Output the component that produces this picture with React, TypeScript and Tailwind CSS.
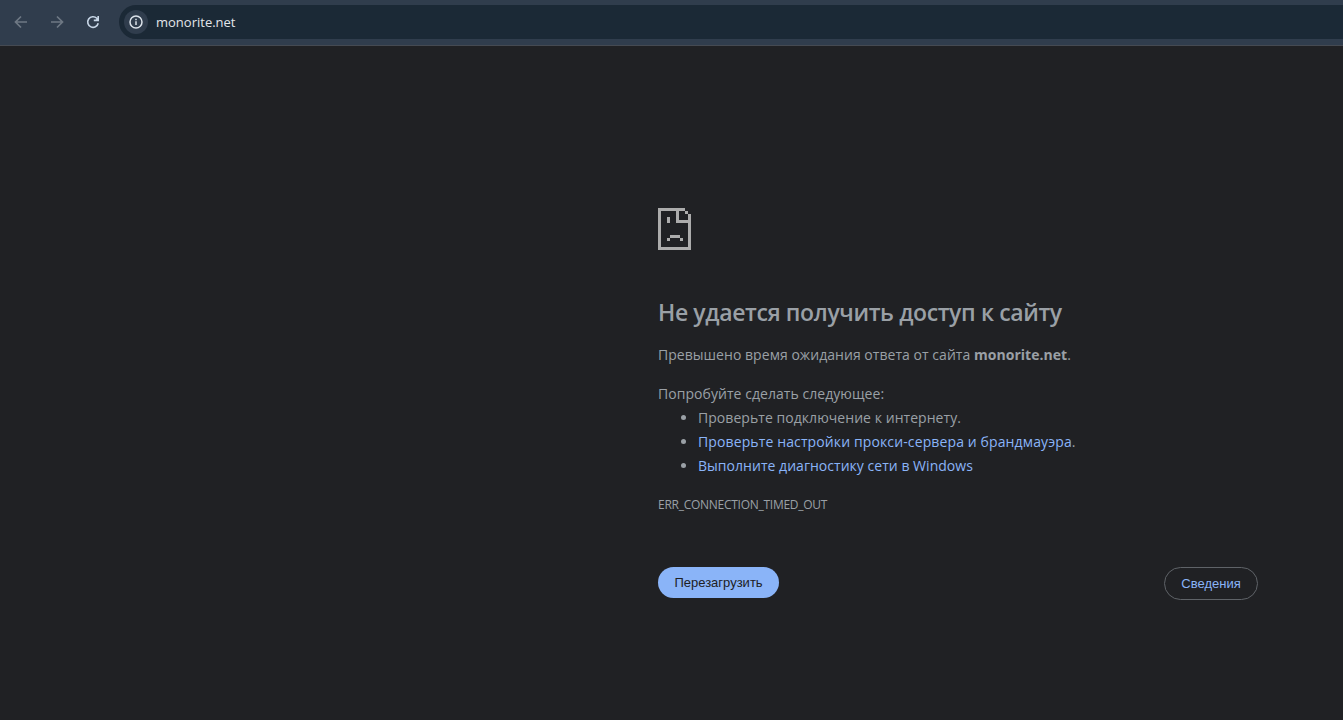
import React from 'react';

const tips = [
  { text: 'Проверьте подключение к интернету', suffix: '.', link: false, spacing: 'tracking-[0.05px]' },
  { text: 'Проверьте настройки прокси-сервера и брандмауэра', suffix: '.', link: true, spacing: 'tracking-[0.12px]' },
  { text: 'Выполните диагностику сети в Windows', suffix: '', link: true, spacing: 'tracking-[0.03px]' },
];

const ArrowIcon: React.FC<{ className?: string }> = ({ className = '' }) => (
  <svg className={`h-4 w-4 ${className}`} viewBox="0 0 16 16" fill="none" stroke="currentColor" strokeWidth="1.7">
    <path d="M14 8H3M8 2.5L2.5 8L8 13.5" />
  </svg>
);

const ReloadIcon: React.FC = () => (
  <svg className="h-4 w-4 text-[#c7d6e6]" viewBox="0 0 16 16" fill="none" stroke="currentColor" strokeWidth="1.6">
    <path d="M13.2 9.2A5.3 5.3 0 1 1 11.8 4.3L13 5.5" />
    <path d="M13.2 2V6.4H8.8" />
    <path d="M13.2 3.2V6.4H10Z" fill="currentColor" stroke="none" />
  </svg>
);

const InfoIcon: React.FC = () => (
  <svg className="h-4 w-4 text-[#dce3ea]" viewBox="0 0 16 16" fill="none" stroke="currentColor" strokeWidth="1.5">
    <circle cx="8" cy="8" r="6" />
    <path d="M8 7.2V11M8 4.8V6.2" />
  </svg>
);

const SadPageIcon: React.FC = () => (
  <svg className="block h-[42px] w-[33px] text-[#acacac]" viewBox="0 0 33 42" fill="currentColor" shapeRendering="crispEdges">
    <path d="M0 0H27V3H21V12H30V6H33V42H0ZM3 3V39H30V15H18V3Z" fillRule="evenodd" />
    <path d="M27 3H30V6H27ZM9 9H12V15H9ZM12 27H22V30H12ZM9 30H12V33H9ZM22 30H25V33H22Z" />
  </svg>
);

const Toolbar: React.FC = () => (
  <header className="flex h-[46px] items-start border-b border-[#454a52] bg-[#303d4d]">
    <div className="flex h-11 w-[119px] shrink-0 items-center gap-5 pl-[13px]">
      <ArrowIcon className="text-[#6e7884]" />
      <ArrowIcon className="rotate-180 text-[#6e7884]" />
      <ReloadIcon />
    </div>
    <div className="mt-[5px] flex h-[34px] flex-1 items-center rounded-l-full bg-[#1b2936] pl-[5px]">
      <div className="flex h-6 w-6 items-center justify-center rounded-full bg-[#303d4d]">
        <InfoIcon />
      </div>
      <span className="ml-2 pt-0.5 text-[13px] whitespace-nowrap text-[#e3e6ea]">monorite.net</span>
    </div>
  </header>
);

export default function App() {
  return (
    <div className="h-[720px] w-[1343px] overflow-hidden bg-[#202124] font-['Open_Sans','Noto_Sans',sans-serif] text-[#9aa0a6]">
      <Toolbar />
      <main className="ml-[658px] w-[600px] pt-[162px] text-sm leading-6">
        <SadPageIcon />
        <h1 className="mt-[47px] text-[23px] leading-[30px] font-semibold tracking-[-0.38px] whitespace-nowrap">
          <span>Не удается получить доступ к сайту</span>
        </h1>
        <p className="mt-4 tracking-[0.04px] whitespace-nowrap">
          <span>Превышено время ожидания ответа от сайта </span>
          <strong className="font-bold">monorite.net</strong>.
        </p>
        <p className="mt-[15px] tracking-[0.05px] whitespace-nowrap">
          <span>Попробуйте сделать следующее:</span>
        </p>
        <ul className="list-disc pl-10">
          {tips.map((tip) => (
            <li key={tip.text} className="whitespace-nowrap">
              <span className={`${tip.spacing} ${tip.link ? 'text-[#8ab4f8]' : ''}`}>{tip.text}</span>
              {tip.suffix}
            </li>
          ))}
        </ul>
        <div className="mt-[15px] text-xs leading-6 tracking-[-0.27px]">
          <span>ERR_CONNECTION_TIMED_OUT</span>
        </div>
        <div className="mt-[50px] flex items-start justify-between font-['Liberation_Sans',Arial,sans-serif] text-[13px]">
          <button className="h-[31px] w-[121px] rounded-full bg-[#8ab4f8] text-[#202124]">
            <span>Перезагрузить</span>
          </button>
          <button className="h-[33px] w-[94px] rounded-full border border-[#5f6368] text-[#8ab4f8]">
            <span>Сведения</span>
          </button>
        </div>
      </main>
    </div>
  );
}
